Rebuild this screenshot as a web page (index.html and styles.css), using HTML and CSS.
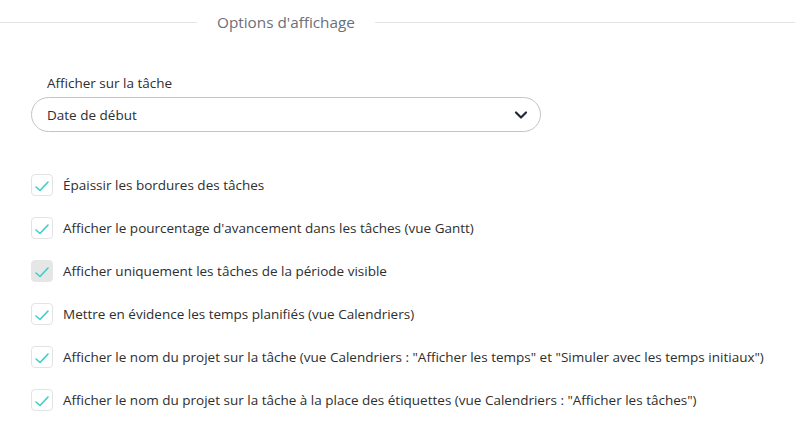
FILE: index.html
```html
<!DOCTYPE html>
<html lang="fr">
<head>
<meta charset="utf-8">
<link rel="stylesheet" href="styles.css">
</head>
<body>
<div class="panel">
  <div class="legend">
    <span class="line line-left"></span>
    <span class="legend-text">Options d'affichage</span>
    <span class="line line-right"></span>
  </div>
  <div class="field">
    <div class="field-label">Afficher sur la tâche</div>
    <div class="select">
      <span>Date de début</span>
      <svg class="chevron" width="14" height="10" viewBox="0 0 14 10"><path d="M2 2.5 L7 7.5 L12 2.5" fill="none" stroke="#1f2937" stroke-width="2.2" stroke-linecap="round" stroke-linejoin="round"/></svg>
    </div>
  </div>
  <ul class="options">
    <li class="option"><span class="box"><svg width="16" height="12" viewBox="0 0 16 12"><path d="M2 7 L6 10.5 L14 2" fill="none" stroke="#3ccfc5" stroke-width="1.6" stroke-linecap="round" stroke-linejoin="round"/></svg></span><span>Épaissir les bordures des tâches</span></li>
    <li class="option"><span class="box"><svg width="16" height="12" viewBox="0 0 16 12"><path d="M2 7 L6 10.5 L14 2" fill="none" stroke="#3ccfc5" stroke-width="1.6" stroke-linecap="round" stroke-linejoin="round"/></svg></span><span>Afficher le pourcentage d'avancement dans les tâches (vue Gantt)</span></li>
    <li class="option"><span class="box disabled"><svg width="16" height="12" viewBox="0 0 16 12"><path d="M2 7 L6 10.5 L14 2" fill="none" stroke="#3ccfc5" stroke-width="1.6" stroke-linecap="round" stroke-linejoin="round"/></svg></span><span>Afficher uniquement les tâches de la période visible</span></li>
    <li class="option"><span class="box"><svg width="16" height="12" viewBox="0 0 16 12"><path d="M2 7 L6 10.5 L14 2" fill="none" stroke="#3ccfc5" stroke-width="1.6" stroke-linecap="round" stroke-linejoin="round"/></svg></span><span>Mettre en évidence les temps planifiés (vue Calendriers)</span></li>
    <li class="option"><span class="box"><svg width="16" height="12" viewBox="0 0 16 12"><path d="M2 7 L6 10.5 L14 2" fill="none" stroke="#3ccfc5" stroke-width="1.6" stroke-linecap="round" stroke-linejoin="round"/></svg></span><span>Afficher le nom du projet sur la tâche (vue Calendriers : "Afficher les temps" et "Simuler avec les temps initiaux")</span></li>
    <li class="option"><span class="box"><svg width="16" height="12" viewBox="0 0 16 12"><path d="M2 7 L6 10.5 L14 2" fill="none" stroke="#3ccfc5" stroke-width="1.6" stroke-linecap="round" stroke-linejoin="round"/></svg></span><span>Afficher le nom du projet sur la tâche à la place des étiquettes (vue Calendriers : "Afficher les tâches")</span></li>
  </ul>
</div>
</body>
</html>
```

FILE: styles.css
```css
html, body {
  margin: 0;
  padding: 0;
  background: #ffffff;
}
body {
  font-family: "Open Sans", "Lato", sans-serif;
  color: #2e2e2e;
  width: 796px;
  height: 445px;
  overflow: hidden;
}
.panel {
  padding-top: 11px;
}
.legend {
  display: flex;
  align-items: center;
  height: 22px;
}
.line {
  height: 1px;
  background: #e4e4e4;
}
.line-left {
  width: 197px;
}
.line-right {
  flex: 1;
  margin-right: 1px;
}
.legend-text {
  padding: 0 20px;
  font-size: 15.3px;
  color: #6b6f7a;
}
.field {
  margin-top: 42px;
  padding-left: 31px;
}
.field-label {
  padding-left: 16px;
  font-size: 13.5px;
  line-height: 16px;
  margin-bottom: 6px;
}
.select {
  width: 510px;
  height: 35px;
  box-sizing: border-box;
  border: 1px solid #c4c4c4;
  border-radius: 18px;
  display: flex;
  align-items: center;
  justify-content: space-between;
  padding: 0 12px 0 15px;
  font-size: 13.5px;
}
.chevron {
  display: block;
}
.options {
  list-style: none;
  margin: 42px 0 0;
  padding: 0 0 0 31px;
  display: flex;
  flex-direction: column;
  gap: 21px;
}
.option {
  display: flex;
  align-items: center;
  gap: 10px;
  height: 22px;
  font-size: 13.5px;
}
.box {
  width: 22px;
  height: 22px;
  box-sizing: border-box;
  border: 1px solid #e3e3e3;
  border-radius: 4px;
  display: flex;
  align-items: center;
  justify-content: center;
  background: #fff;
}
.box svg {
  display: block;
  margin-top: 2px;
}
.box.disabled {
  background: #e6e6e6;
  border-color: #e6e6e6;
}
```
